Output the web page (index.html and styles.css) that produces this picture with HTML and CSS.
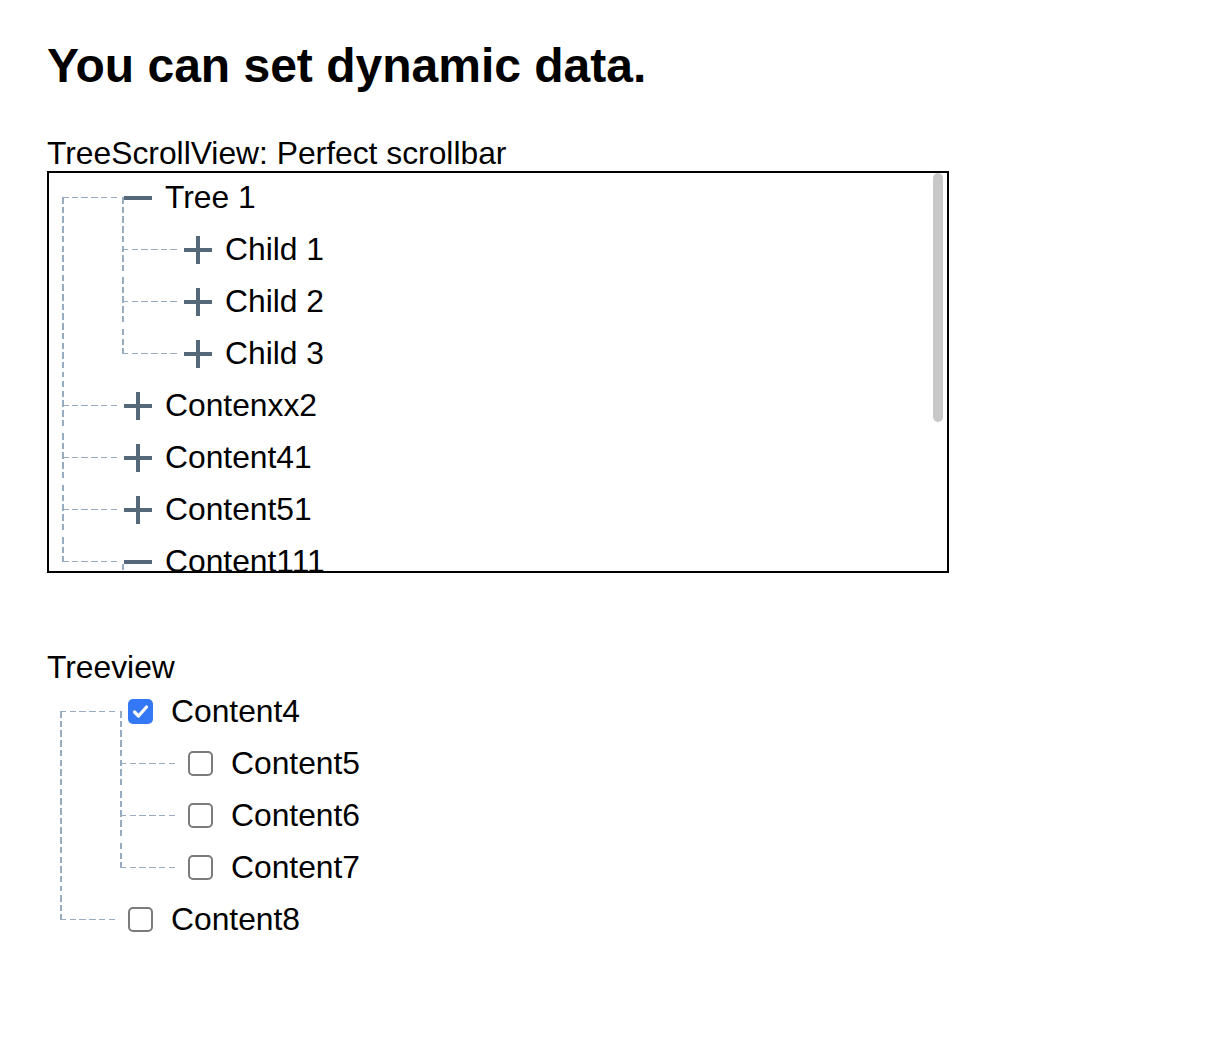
FILE: index.html
```html
<!DOCTYPE html>
<html lang="en">
<head>
<meta charset="utf-8">
<title>Tree view demo</title>
<link rel="stylesheet" href="styles.css">
</head>
<body>
<main class="page">
  <h1 class="title">You can set dynamic data.</h1>

  <section class="demo">
    <div class="caption">TreeScrollView: Perfect scrollbar</div>
    <div class="scroll-box">
      <ul class="tree">
        <li>
          <div class="row"><span class="expander"><svg viewBox="0 0 28 28"><line x1="0" y1="14" x2="28" y2="14"/></svg></span><span class="text">Tree 1</span></div>
          <ul>
            <li><div class="row"><span class="expander"><svg viewBox="0 0 28 28"><line x1="0" y1="14" x2="28" y2="14"/><line x1="14" y1="0" x2="14" y2="28"/></svg></span><span class="text">Child 1</span></div></li>
            <li><div class="row"><span class="expander"><svg viewBox="0 0 28 28"><line x1="0" y1="14" x2="28" y2="14"/><line x1="14" y1="0" x2="14" y2="28"/></svg></span><span class="text">Child 2</span></div></li>
            <li><div class="row"><span class="expander"><svg viewBox="0 0 28 28"><line x1="0" y1="14" x2="28" y2="14"/><line x1="14" y1="0" x2="14" y2="28"/></svg></span><span class="text">Child 3</span></div></li>
          </ul>
        </li>
        <li><div class="row"><span class="expander"><svg viewBox="0 0 28 28"><line x1="0" y1="14" x2="28" y2="14"/><line x1="14" y1="0" x2="14" y2="28"/></svg></span><span class="text">Contenxx2</span></div></li>
        <li><div class="row"><span class="expander"><svg viewBox="0 0 28 28"><line x1="0" y1="14" x2="28" y2="14"/><line x1="14" y1="0" x2="14" y2="28"/></svg></span><span class="text">Content41</span></div></li>
        <li><div class="row"><span class="expander"><svg viewBox="0 0 28 28"><line x1="0" y1="14" x2="28" y2="14"/><line x1="14" y1="0" x2="14" y2="28"/></svg></span><span class="text">Content51</span></div></li>
        <li>
          <div class="row row--open"><span class="expander"><svg viewBox="0 0 28 28"><line x1="0" y1="14" x2="28" y2="14"/></svg></span><span class="text">Content111</span></div>
        </li>
      </ul>
      <div class="thumb"></div>
    </div>
  </section>

  <section class="demo demo--treeview">
    <div class="caption">Treeview</div>
    <ul class="tree tree--check">
      <li>
        <div class="row"><span class="check check--on"><svg viewBox="0 0 25 25"><path d="M6.5 13 L10.5 17 L18.5 8"/></svg></span><span class="text">Content4</span></div>
        <ul>
          <li><div class="row"><span class="check"></span><span class="text">Content5</span></div></li>
          <li><div class="row"><span class="check"></span><span class="text">Content6</span></div></li>
          <li><div class="row"><span class="check"></span><span class="text">Content7</span></div></li>
        </ul>
      </li>
      <li><div class="row"><span class="check"></span><span class="text">Content8</span></div></li>
    </ul>
  </section>
</main>
</body>
</html>
```

FILE: styles.css
```css
html, body {
  margin: 0;
  padding: 0;
  background: #ffffff;
}

body {
  font-family: "Liberation Sans", Arial, Helvetica, sans-serif;
  color: #000000;
}

.page {
  padding: 38px 0 0 47px;
}

.title {
  margin: 0;
  font-size: 48px;
  line-height: 56px;
  font-weight: 700;
}

.demo {
  margin-top: 41px;
}

.demo--treeview {
  margin-top: 76px;
}

.caption {
  font-size: 31.8px;
  line-height: 36px;
}

.scroll-box {
  position: relative;
  box-sizing: border-box;
  width: 902px;
  height: 402px;
  border: 2px solid #000000;
  overflow: hidden;
}

.thumb {
  position: absolute;
  top: 0;
  right: 4px;
  width: 10px;
  height: 249px;
  border-radius: 5px;
  background: #c8c8c8;
}

.tree,
.tree ul {
  list-style: none;
  margin: 0;
  padding: 0;
}

.tree ul {
  margin-left: 60px;
}

.tree li {
  position: relative;
}

/* vertical connector */
.tree li::before {
  content: "";
  position: absolute;
  left: 13px;
  top: 0;
  bottom: 0;
  width: 1.5px;
  background: repeating-linear-gradient(to bottom, #97acc0 0 6.5px, transparent 6.5px 9.7px);
}

.tree > li:first-child::before {
  top: 24px;
}

.tree ul > li:first-child::before {
  top: -28px;
}

.tree li:last-child::before {
  bottom: auto;
  height: 24px;
}

.tree ul > li:first-child:last-child::before {
  height: 52px;
}

.row {
  position: relative;
  display: flex;
  align-items: center;
  height: 48px;
  margin-bottom: 4px;
  padding-left: 75px;
  gap: 13px;
  font-size: 31.8px;
  line-height: 48px;
  white-space: nowrap;
}

/* horizontal connector */
.row::before {
  content: "";
  position: absolute;
  left: 13px;
  top: 23.5px;
  width: 58px;
  height: 1.5px;
  background: repeating-linear-gradient(to right, #97acc0 0 6.5px, transparent 6.5px 9.7px);
}

/* start of the child connector under an expanded node */
.row--open::after {
  content: "";
  position: absolute;
  left: 73px;
  top: 27px;
  width: 1.5px;
  height: 25px;
  background: repeating-linear-gradient(to bottom, #97acc0 0 6.5px, transparent 6.5px 9.7px);
}

.expander {
  display: block;
  width: 28px;
  height: 28px;
  flex: none;
  margin-top: 2px;
}

.expander svg {
  display: block;
  width: 28px;
  height: 28px;
}

.expander line {
  stroke: #55687a;
  stroke-width: 4;
}

/* checkbox tree */
.tree--check {
  padding: 2px 0 0 2px;
}

.tree--check li::before {
  left: 11px;
}

.tree--check .row {
  padding-left: 79px;
  gap: 18px;
}

.tree--check .row::before {
  left: 11px;
  width: 56px;
}

.check {
  display: block;
  box-sizing: border-box;
  width: 25px;
  height: 25px;
  flex: none;
  border: 2px solid #7b7b7b;
  border-radius: 5px;
  background: #ffffff;
}

.check--on {
  border: none;
  background: #3478f6;
}

.check svg {
  display: block;
  width: 25px;
  height: 25px;
}

.check path {
  fill: none;
  stroke: #ffffff;
  stroke-width: 3.2;
  stroke-linecap: round;
  stroke-linejoin: round;
}
```
